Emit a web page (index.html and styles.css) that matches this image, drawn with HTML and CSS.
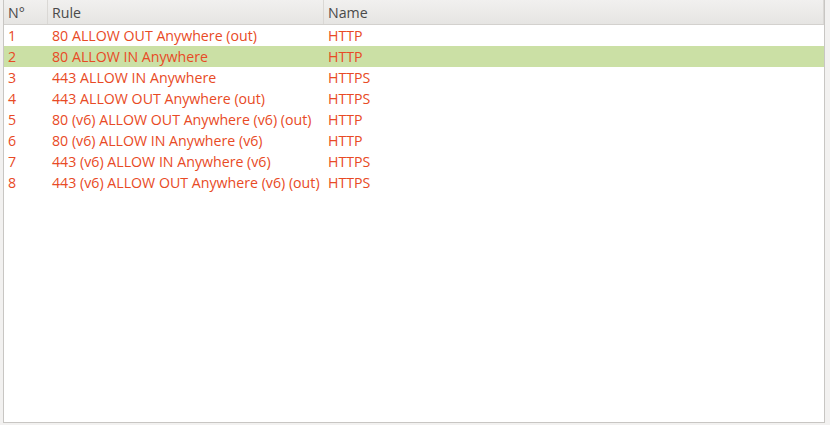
FILE: index.html
```html
<!DOCTYPE html>
<html>
<head>
<meta charset="utf-8">
<link rel="stylesheet" href="styles.css">
</head>
<body>
<div class="frame">
  <div class="header">
    <div class="hcell c1">N°</div>
    <div class="hcell c2">Rule</div>
    <div class="hcell c3">Name</div>
  </div>
  <div class="rows">
    <div class="row"><div class="cell c1">1</div><div class="cell c2">80 ALLOW OUT Anywhere (out)</div><div class="cell c3">HTTP</div></div>
    <div class="row sel"><div class="cell c1">2</div><div class="cell c2">80 ALLOW IN Anywhere</div><div class="cell c3">HTTP</div></div>
    <div class="row"><div class="cell c1">3</div><div class="cell c2">443 ALLOW IN Anywhere</div><div class="cell c3">HTTPS</div></div>
    <div class="row"><div class="cell c1">4</div><div class="cell c2">443 ALLOW OUT Anywhere (out)</div><div class="cell c3">HTTPS</div></div>
    <div class="row"><div class="cell c1">5</div><div class="cell c2">80 (v6) ALLOW OUT Anywhere (v6) (out)</div><div class="cell c3">HTTP</div></div>
    <div class="row"><div class="cell c1">6</div><div class="cell c2">80 (v6) ALLOW IN Anywhere (v6)</div><div class="cell c3">HTTP</div></div>
    <div class="row"><div class="cell c1">7</div><div class="cell c2">443 (v6) ALLOW IN Anywhere (v6)</div><div class="cell c3">HTTPS</div></div>
    <div class="row"><div class="cell c1">8</div><div class="cell c2">443 (v6) ALLOW OUT Anywhere (v6) (out)</div><div class="cell c3">HTTPS</div></div>
  </div>
</div>
</body>
</html>
```
FILE: styles.css
```css
html, body {
  margin: 0;
  padding: 0;
  background: #f2f1f0;
  font-family: "Open Sans", "DejaVu Sans", sans-serif;
  font-size: 14.2px;
}
body {
  padding: 0 5px 2px 3px;
  height: 425px;
  box-sizing: border-box;
}
.frame {
  height: 100%;
  box-sizing: border-box;
  background: #ffffff;
  border: 1px solid #c8c6c3;
  border-top: none;
  display: flex;
  flex-direction: column;
}
.header {
  display: flex;
  height: 24px;
  flex: none;
  background: linear-gradient(#f1f0ef, #e6e5e3);
  border-bottom: 1px solid #d3d1ce;
  color: #4a4a4a;
}
.hcell {
  display: flex;
  align-items: center;
  padding-left: 4px;
  box-sizing: border-box;
  border-right: 1px solid #dad8d5;
}
.c1 { width: 44px; flex: none; }
.c2 { width: 276px; flex: none; }
.c3 { flex: 1; }
.rows { flex: 1; }
.row {
  display: flex;
  height: 21px;
  align-items: center;
  color: #e84a25;
}
.row.sel { background: #cbe0a5; }
.cell {
  padding-left: 4px;
  box-sizing: border-box;
  white-space: nowrap;
}
```
